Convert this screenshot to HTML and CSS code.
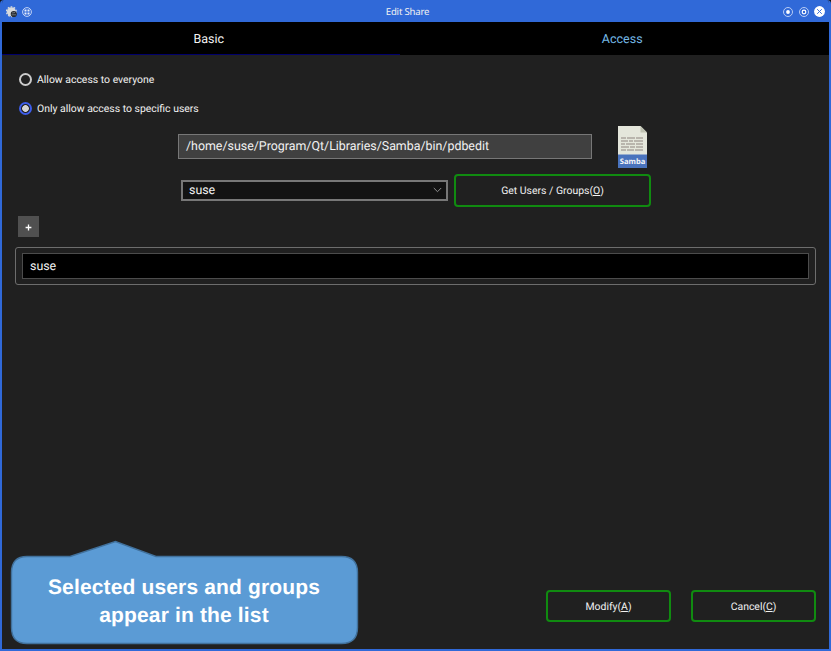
FILE: index.html
```html
<!DOCTYPE html>
<html lang="en">
<head>
<meta charset="utf-8">
<title>Edit Share</title>
<link rel="stylesheet" href="styles.css">
</head>
<body>
<div class="window">
  <header class="titlebar">
    <div class="title-left">
      <svg width="12" height="12" viewBox="0 0 12 12"><circle cx="5.4" cy="5.7" r="4.5" fill="#d8dadc"/><circle cx="5.4" cy="5.7" r="4.9" fill="none" stroke="#d8dadc" stroke-width="1.3" stroke-dasharray="1.7 1.4"/><circle cx="7.8" cy="8" r="3.1" fill="#272b30"/><path d="M5.5 8.8h4.5M6 7l3-.6" stroke="#80858a" stroke-width=".8"/></svg>
      <svg width="10" height="10" viewBox="0 0 10 10"><circle cx="5" cy="5" r="4.4" fill="none" stroke="#c3d3f4"/><g fill="#e7eefb"><rect x="2.5" y="2.5" width="2" height="2"/><rect x="5.5" y="2.5" width="2" height="2"/><rect x="2.5" y="5.5" width="2" height="2"/><rect x="5.5" y="5.5" width="2" height="2"/></g></svg>
    </div>
    <div class="title">Edit Share</div>
    <div class="title-right">
      <svg width="10" height="10" viewBox="0 0 10 10"><circle cx="5" cy="5" r="4.5" fill="none" stroke="#b9ccf3" stroke-width="1"/><circle cx="5" cy="5" r="1.9" fill="#fff"/></svg>
      <svg width="10" height="10" viewBox="0 0 10 10"><circle cx="5" cy="5" r="4.5" fill="none" stroke="#b9ccf3" stroke-width="1"/><circle cx="5" cy="5" r="1.8" fill="none" stroke="#fff" stroke-width="1.2"/></svg>
      <svg width="11" height="11" viewBox="0 0 11 11"><circle cx="5.5" cy="5.5" r="5.4" fill="#fff"/><path d="M3.2 3.2l4.6 4.6M7.8 3.2l-4.6 4.6" stroke="#3c6fd8" stroke-width="1"/></svg>
    </div>
  </header>
  <nav class="tabs"><div class="tab active">Basic</div><div class="tab">Access</div></nav>
  <main class="content">
    <div class="radio"><i class="dot"></i><span>Allow access to everyone</span></div>
    <div class="radio second"><i class="dot on"></i><span>Only allow access to specific users</span></div>
    <div class="path-row">
      <div class="path">/home/suse/Program/Qt/Libraries/Samba/bin/pdbedit</div>
      <svg width="30" height="42" viewBox="0 0 30 42"><path d="M0 0h22.5l6.5 6.5V29H0z" fill="#e4e6db"/><path d="M22.5 0l6.5 6.5h-6.5z" fill="#bfc2b2"/><g stroke="#aaa59f" stroke-width="1.6"><path d="M3 12h5m1 0h8m1 0h7M3 15h7m1 0h4m1 0h9M3 18h4m1 0h9m1 0h7M3 21h8m1 0h5m1 0h7M3 24h5m1 0h7m1 0h8"/></g><path d="M0 28.5h29V42H0z" fill="#4a73bd"/><text class="samba-label" x="14.5" y="38" text-anchor="middle">Samba</text></svg>
    </div>
    <div class="user-row">
      <div class="select"><span>suse</span><svg width="9" height="6" viewBox="0 0 9 6"><path d="M.8 1l3.7 3.7L8.2 1" fill="none" stroke="#909090"/></svg></div>
      <div class="button get"><span>Get Users / Groups(<u>O</u>)</span></div>
    </div>
    <div class="add"><svg width="7" height="7" viewBox="0 0 7 7"><path d="M3.5 .6v5.8M.6 3.5h5.8" stroke="#fff" stroke-width="1.3"/></svg></div>
    <div class="list"><div class="item">suse</div></div>
    <footer class="actions"><div class="button"><span>Modify(<u>A</u>)</span></div><div class="button"><span>Cancel(<u>C</u>)</span></div></footer>
  </main>
</div>
<aside class="callout">
  <svg width="349" height="105" viewBox="0 0 349 105"><path d="M17 16.5H60L105.5 1.5L146 16.5H331.5Q347.5 16.5 347.5 32.5V87.5Q347.5 103.5 331.5 103.5H17Q1.5 103.5 1.5 87.5V32.5Q1.5 16.5 17 16.5Z" fill="#5b9bd5" stroke="#41719c" stroke-width="1.4"/></svg>
  <div class="callout-text"><span>Selected users and groups</span><span>appear in the list</span></div>
</aside>
</body>
</html>
```
FILE: styles.css
```css
* { box-sizing: border-box; }
body { margin: 0; background: #111; font-family: Roboto, sans-serif; color: #f2f2f2; text-rendering: geometricPrecision; }
svg { display: block; flex: none; }
.window { width: 831px; height: 651px; display: flex; flex-direction: column; background: #202020; border: solid #3069d8; border-width: 0 2px 2px; border-radius: 4px 4px 0 0; overflow: hidden; }
.titlebar { height: 22px; flex: none; background: #3069d8; display: grid; grid-template-columns: 100px 1fr 100px; align-items: center; }
.title-left { display: flex; align-items: center; gap: 4px; padding-left: 4px; }
.title { text-align: center; padding: 1px 16px 0 0; font: 9.6px/22px "Noto Sans", sans-serif; letter-spacing: -.2px; }
.title-right { display: flex; align-items: center; justify-content: flex-end; gap: 5.5px; padding-right: 4px; }
.tabs { height: 33px; flex: none; display: flex; background: #000; font-size: 12.5px; line-height: 36px; text-align: center; }
.tab { width: 50%; height: 33px; color: #74b8e4; }
.tab.active { color: #f4f4f4; background: linear-gradient(#00006c, #00006c) 0 100% / 398px 1px no-repeat; }
.content { flex: 1; display: flex; flex-direction: column; padding: 17px 13px 27px; }
.radio { height: 14px; display: flex; align-items: center; gap: 5px; padding-left: 4px; font-size: 10.45px; line-height: 14px; }
.radio span { padding-top: 1px; }
.radio.second { margin-top: 15px; }
.dot { width: 13px; height: 13px; border: 2px solid #cacaca; border-radius: 50%; }
.dot.on { border-color: #3d5de8; background: radial-gradient(circle, #d3d3d3 3px, transparent 3.7px); }
.path-row { display: flex; align-items: center; height: 42px; margin: 11px 0 0 163px; gap: 26px; }
.path { width: 414px; height: 25px; margin-top: -2px; border: 1px solid #777; background: #404040; font-size: 12.4px; line-height: 24px; padding-left: 7px; }
.user-row { display: flex; align-items: center; height: 33px; margin: 6px 0 0 166px; gap: 6px; }
.select { width: 267px; height: 21px; border: 2px solid #777; background: #131313; font-size: 12.4px; line-height: 17px; padding: 0 4px 0 6px; display: flex; align-items: center; justify-content: space-between; margin-top: -1px; }
.button { width: 125px; height: 32px; border: 2px solid #108b10; border-radius: 4px; display: flex; align-items: center; justify-content: center; font-size: 10.45px; }
.button.get { width: 197px; height: 33px; }
u { text-underline-offset: 1px; text-decoration-thickness: 1px; }
.add { width: 21px; height: 21px; margin: 9px 0 10px 3px; background: #505050; display: flex; align-items: center; justify-content: center; padding-top: 1px; }
.list { width: 801px; height: 38px; border: 1px solid #6d6d6d; border-radius: 3px; padding: 5px 6px; }
.item { height: 26px; border: 1px solid #4c4c4c; background: #000; font-size: 12.4px; line-height: 26px; padding-left: 7px; }
.actions { margin-top: auto; width: 801px; display: flex; justify-content: flex-end; gap: 20px; }
.samba-label { font: bold 7.6px "Noto Sans", sans-serif; fill: #f4f5f8; }
.callout { position: absolute; left: 10px; top: 540px; width: 349px; height: 105px; color: #fff; }
.callout-text { position: absolute; inset: 34px 1px auto 0; display: flex; flex-direction: column; align-items: center; font: bold 21px/28px "Liberation Sans", sans-serif; letter-spacing: .15px; }
```
